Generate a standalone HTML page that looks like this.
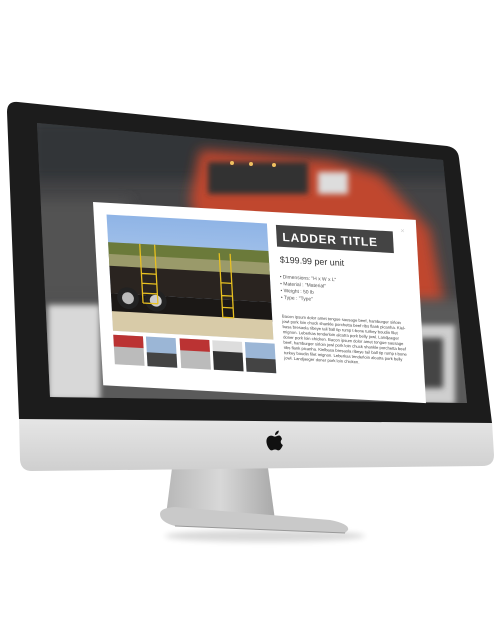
<!DOCTYPE html>
<html><head><meta charset="utf-8"><style>
html,body{margin:0;padding:0;background:#fff;width:500px;height:643px;overflow:hidden}
svg{display:block}
text{font-family:"Liberation Sans",sans-serif}
</style></head><body>
<svg width="500" height="643" viewBox="0 0 500 643" xmlns="http://www.w3.org/2000/svg">
<defs>
<filter id="b6" x="-50%" y="-50%" width="200%" height="200%"><feGaussianBlur stdDeviation="6"/></filter>
<filter id="b3" x="-50%" y="-50%" width="200%" height="200%"><feGaussianBlur stdDeviation="3"/></filter>
<linearGradient id="chin" x1="0" y1="0" x2="0" y2="1"><stop offset="0" stop-color="#e6e6e6"/><stop offset="1" stop-color="#cfcfcf"/></linearGradient>
<linearGradient id="stand" x1="0" y1="0" x2="1" y2="0"><stop offset="0" stop-color="#b8b8b8"/><stop offset="0.5" stop-color="#d8d8d8"/><stop offset="1" stop-color="#a9a9a9"/></linearGradient>
<linearGradient id="sky" x1="0" y1="0" x2="0" y2="1"><stop offset="0" stop-color="#8fb4e6"/><stop offset="1" stop-color="#c9dcf0"/></linearGradient>
<clipPath id="scr"><polygon points="37,123 443,160 467,403 50,397"/></clipPath>
</defs>

<ellipse cx="265" cy="536" rx="100" ry="6" fill="#000" opacity="0.15" filter="url(#b3)"/>
<polygon points="172,468 268,468 275,520 166,515" fill="url(#stand)"/>
<path d="M160,514 Q160,508 175,507 L330,520 Q350,524 348,530 L345,533 L175,526 Q160,522 160,514 Z" fill="#c9c9c9"/>
<path d="M175,526 L345,533" stroke="#999" stroke-width="1"/>

<path d="M19,418 L492,422 L494,455 Q494,466 482,466 L32,471 Q21,471 20,460 Z" fill="url(#chin)"/>
<path d="M7,112 Q7,101 18,102 L447,146 Q458,148 459,158 L492,423 L19,419 Z" fill="#1c1c1c"/>

<g clip-path="url(#scr)">
<rect x="0" y="100" width="500" height="320" fill="#444446"/>
<rect x="30" y="120" width="450" height="60" fill="#333438" filter="url(#b6)"/>
<rect x="30" y="200" width="100" height="100" fill="#525252" filter="url(#b6)"/>
<path d="M190,200 L200,150 L330,160 L380,175 L430,230 L445,305 L405,305 L380,250 L200,230 Z" fill="#c0462f" filter="url(#b6)"/>
<rect x="208" y="162" width="100" height="32" fill="#333" filter="url(#b3)"/>
<rect x="318" y="172" width="30" height="22" fill="#ddd" filter="url(#b3)"/>
<circle cx="232" cy="163" r="2" fill="#f0c060"/><circle cx="251" cy="164" r="2" fill="#f0c060"/><circle cx="274" cy="165" r="2" fill="#f0c060"/>
<rect x="30" y="300" width="450" height="110" fill="#5a5a5a" filter="url(#b6)"/>
<rect x="48" y="305" width="52" height="95" fill="#d8d8d8" filter="url(#b3)"/>
<rect x="410" y="325" width="45" height="80" fill="#cfcfcf" filter="url(#b3)"/>
<rect x="418" y="338" width="25" height="50" fill="#444" filter="url(#b3)"/>
</g>

<g transform="matrix(0.99,0.055,0.055,0.985,93,202)">
<rect x="0" y="0" width="326" height="186" fill="#fff"/>
<rect x="13" y="12" width="162" height="118" fill="url(#sky)"/>
<rect x="13" y="40" width="162" height="25" fill="#6b7a3a"/>
<rect x="13" y="52" width="162" height="14" fill="#9a9a6a"/>
<rect x="13" y="64" width="162" height="28" fill="#2a2420"/>
<rect x="13" y="92" width="162" height="20" fill="#1b1816"/>
<rect x="13" y="110" width="162" height="20" fill="#d8cba8"/>
<circle cx="30" cy="96" r="11" fill="#222"/><circle cx="30" cy="96" r="6" fill="#bbb"/>
<circle cx="58" cy="97" r="11" fill="#222"/><circle cx="58" cy="97" r="6" fill="#ccc"/>
<g stroke="#e8c020" stroke-width="1.3" fill="none">
<path d="M45,40 L45,100 M60,40 L60,100 M45,70 L60,70 M45,80 L60,80 M45,90 L60,90 M45,100 L60,100"/>
<path d="M125,45 L125,110 M136,45 L136,110 M125,75 L136,75 M125,88 L136,88 M125,100 L136,100 M125,110 L136,110"/>
</g>
<rect x="13" y="134" width="30" height="30" fill="#bbb"/><rect x="13" y="134" width="30" height="12" fill="#b33"/>
<rect x="46" y="134" width="30" height="30" fill="#9bb6d6"/><rect x="46" y="150" width="30" height="14" fill="#444"/>
<rect x="80" y="134" width="30" height="30" fill="#bbb"/><rect x="80" y="134" width="30" height="12" fill="#b33"/>
<rect x="113" y="134" width="30" height="30" fill="#ddd"/><rect x="113" y="145" width="30" height="19" fill="#333"/>
<rect x="146" y="134" width="30" height="30" fill="#9bb6d6"/><rect x="146" y="150" width="30" height="14" fill="#444"/>
<rect x="184" y="13" width="118" height="22" fill="#444"/>
<text x="190" y="29" font-size="12" font-weight="bold" fill="#fff" letter-spacing="0.8">LADDER TITLE</text>
<text x="310" y="14" font-size="7" fill="#ccc">×</text>
<text x="186" y="51" font-size="9" fill="#333">$199.99 per unit</text>
<g font-size="5" fill="#555">
<text x="185" y="67">• Dimensions: "H x W x L"</text>
<text x="185" y="74">• Material : "Material"</text>
<text x="185" y="81">• Weight : 50 lb</text>
<text x="185" y="88">• Type : "Type"</text>
</g>
<g font-size="4.2" fill="#444">
<text x="185" y="107">Bacon ipsum dolor amet tongue sausage beef, hamburger sirloin</text>
<text x="185" y="112.3">jowl pork loin chuck shankle porchetta beef ribs flank picanha. Kiel-</text>
<text x="185" y="117.6">basa bresaola ribeye tail ball tip rump t-bone turkey boudin filet</text>
<text x="185" y="122.9">mignon. Leberkas tenderloin alcatra pork belly jowl. Landjaeger</text>
<text x="185" y="128.2">doner pork loin chicken. Bacon ipsum dolor amet tongue sausage</text>
<text x="185" y="133.5">beef, hamburger sirloin jowl pork loin chuck shankle porchetta beef</text>
<text x="185" y="138.8">ribs flank picanha. Kielbasa bresaola ribeye tail ball tip rump t-bone</text>
<text x="185" y="144.1">turkey boudin filet mignon. Leberkas tenderloin alcatra pork belly</text>
<text x="185" y="149.4">jowl. Landjaeger doner pork loin chicken.</text>
</g>
</g>

<g transform="translate(266,430) scale(0.85)" fill="#111">
<path d="M15.5,6.5 C13.5,6.5 12.3,7.8 10.7,7.8 C9.1,7.8 7.9,6.6 6,6.6 C3.2,6.6 0.5,9 0.5,13.2 C0.5,18 4,24 6.6,24 C8,24 8.8,23 10.6,23 C12.4,23 13,24 14.6,24 C16.8,24 19.2,19.8 19.8,17.6 C17.3,16.6 16.3,13 18.8,10.8 C18,7.9 16.5,6.5 15.5,6.5 Z"/>
<path d="M10.6,6 C10.4,3.5 12.4,1 15,0.8 C15.3,3.4 12.8,5.9 10.6,6 Z"/>
</g>
</svg>
</body></html>
